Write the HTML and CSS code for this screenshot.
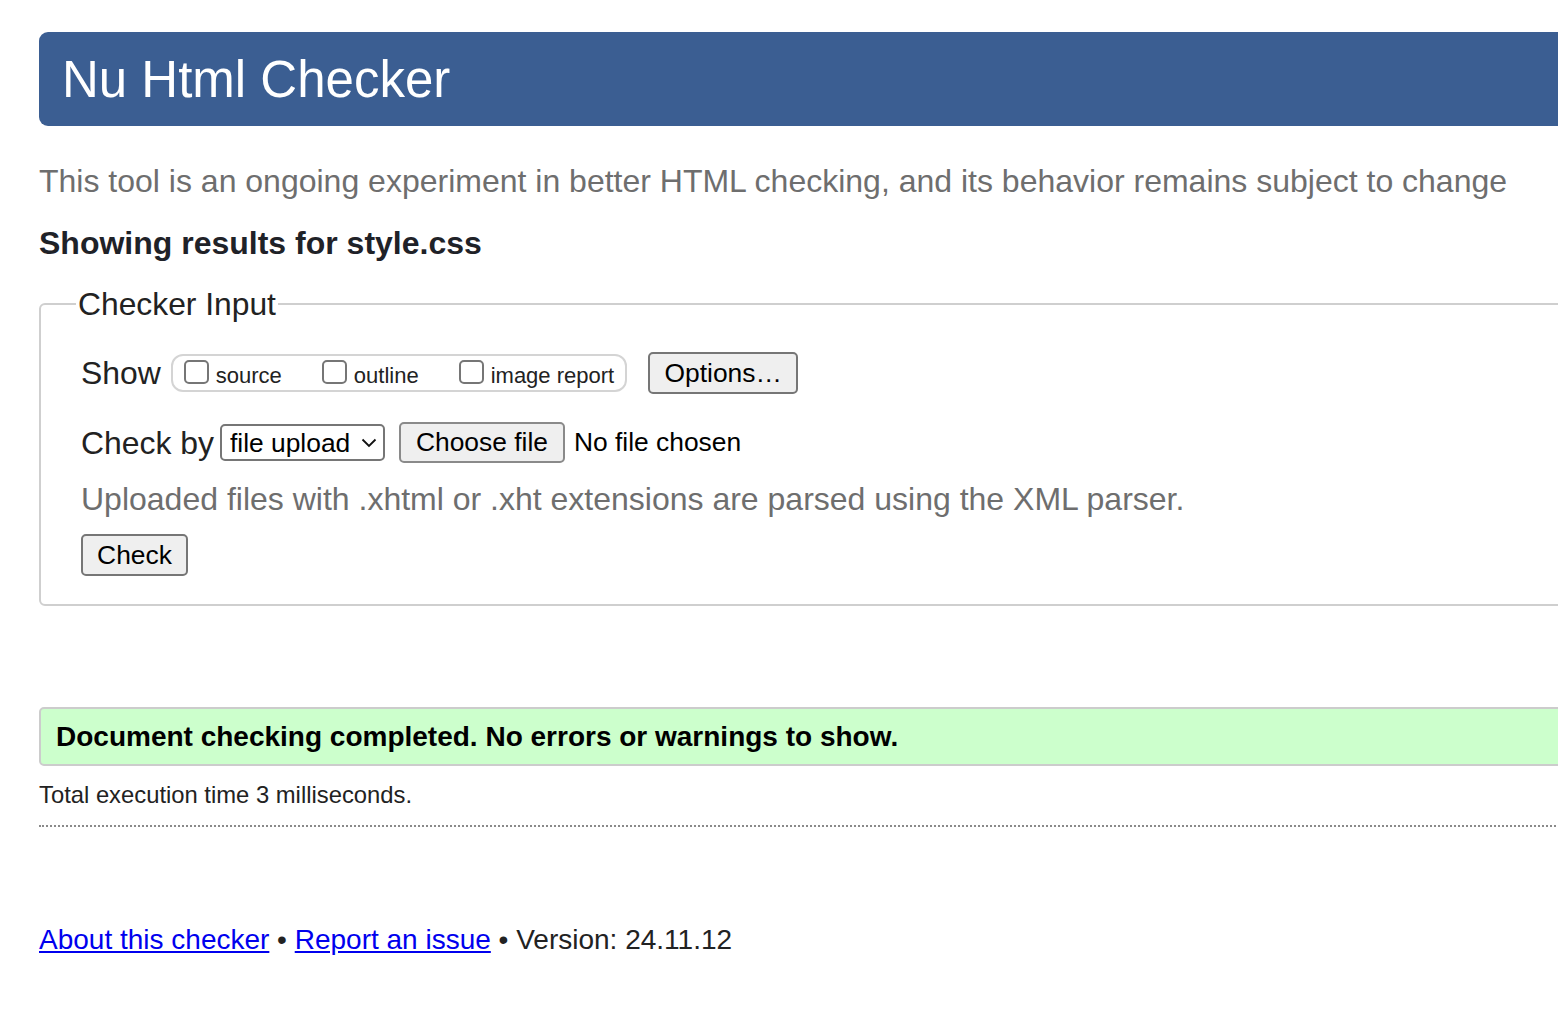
FILE: index.html
```html
<!DOCTYPE html>
<html lang="en">
<head>
<meta charset="utf-8">
<title>Nu Html Checker</title>
<link rel="stylesheet" href="styles.css">
</head>
<body>
<div class="page">
  <header class="banner"><h1 class="title">Nu Html Checker</h1></header>
  <p class="subtitle">This tool is an ongoing experiment in better HTML checking, and its behavior remains subject to change</p>
  <h2 class="results">Showing results for style.css</h2>
  <form class="checker">
    <fieldset class="input-box">
      <legend class="legend">Checker Input</legend>
      <div class="row row-show">
        <span class="row-label">Show</span>
        <div class="show-group">
          <label class="opt"><input type="checkbox" class="cb"><span>source</span></label>
          <label class="opt"><input type="checkbox" class="cb"><span>outline</span></label>
          <label class="opt"><input type="checkbox" class="cb"><span>image report</span></label>
        </div>
        <button type="button" class="btn btn-options">Options…</button>
      </div>
      <div class="row row-check">
        <span class="row-label">Check by</span>
        <div class="select-wrap">
          <select class="select"><option>file upload</option></select>
          <svg class="chev" width="16" height="10" viewBox="0 0 16 10"><path d="M1.5 1.5 L8 8 L14.5 1.5" fill="none" stroke="#111" stroke-width="1.8"/></svg>
        </div>
        <button type="button" class="btn btn-file">Choose file</button>
        <span class="nofile">No file chosen</span>
      </div>
      <p class="hint">Uploaded files with .xhtml or .xht extensions are parsed using the XML parser.</p>
      <button type="button" class="btn btn-check">Check</button>
    </fieldset>
  </form>
  <div class="success">Document checking completed. No errors or warnings to show.</div>
  <p class="exec">Total execution time 3 milliseconds.</p>
  <hr class="dots">
  <p class="footer"><a href="#" class="link">About this checker</a> • <a href="#" class="link">Report an issue</a> • Version: 24.11.12</p>
</div>
</body>
</html>
```
FILE: styles.css
```css
html, body {
  overflow: hidden;
}
body {
  margin: 0;
  padding: 32px 0 0 39px;
  font-family: "Liberation Sans", Arial, sans-serif;
  color: #222;
  background: #fff;
}
.page {
  width: 1600px;
}
.banner {
  height: 94px;
  background: #3b5e92;
  border-radius: 9px 0 0 9px;
  display: flex;
  align-items: center;
}
.title {
  margin: 0 0 0 23px;
  font-size: 51px;
  font-weight: normal;
  color: #fff;
  line-height: 1;
}
.subtitle {
  margin: 37px 0 0;
  font-size: 32px;
  line-height: 36px;
  color: #6e6e6e;
  white-space: nowrap;
}
.results {
  margin: 26px 0 0;
  font-size: 32px;
  line-height: 36px;
  font-weight: bold;
  color: #1f2228;
}
.checker {
  margin: 25px 0 0;
}
.input-box {
  margin: 0;
  border: 2px solid #cfcfcf;
  border-radius: 6px;
  padding: 30px 0 28px 40px;
  min-width: 0;
}
.legend {
  font-size: 31.8px;
  line-height: 36px;
  padding: 0 2px;
  margin-left: -5px;
  color: #222;
}
.row {
  display: flex;
  align-items: center;
}
.row-label {
  font-size: 31.9px;
  line-height: 36px;
  color: #222;
}
.row-show {
  height: 42px;
}
.show-group {
  margin-left: 10px;
  height: 38px;
  box-sizing: border-box;
  border: 2px solid #d4d4d4;
  border-radius: 12px;
  padding: 0 11px;
  display: flex;
  align-items: center;
  gap: 40px;
}
.opt {
  display: flex;
  align-items: center;
  font-size: 22px;
  line-height: 26px;
  color: #222;
}
.opt span {
  margin-top: 5px;
}
.cb {
  appearance: none;
  -webkit-appearance: none;
  margin: 0 7px 3px 0;
  width: 25px;
  height: 24px;
  box-sizing: border-box;
  border: 2px solid #767676;
  border-radius: 5px;
  background: #fff;
}
.btn {
  font-family: "Liberation Sans", Arial, sans-serif;
  font-size: 26.4px;
  color: #000;
  background: #efefef;
  border: 2px solid #767676;
  border-radius: 5px;
  box-sizing: border-box;
  padding: 0;
  line-height: 1;
}
.btn-options {
  margin-left: 21px;
  width: 150px;
  height: 42px;
}
.row-check {
  margin-top: 28px;
  height: 41px;
}
.select-wrap {
  position: relative;
  margin-left: 6px;
}
.select {
  appearance: none;
  -webkit-appearance: none;
  display: block;
  width: 165px;
  height: 37px;
  box-sizing: border-box;
  border: 2px solid #767676;
  border-radius: 5px;
  background: #fff;
  font-family: "Liberation Sans", Arial, sans-serif;
  font-size: 26.4px;
  color: #000;
  padding: 0 0 0 8px;
}
.chev {
  position: absolute;
  right: 8px;
  top: 14px;
  pointer-events: none;
}
.btn-file {
  margin-left: 14px;
  width: 166px;
  height: 41px;
  border-color: #8a8a8a;
}
.nofile {
  margin-left: 9px;
  font-size: 26.4px;
  color: #000;
}
.hint {
  margin: 18px 0 0;
  font-size: 32px;
  line-height: 36px;
  color: #6e6e6e;
  white-space: nowrap;
}
.btn-check {
  display: block;
  margin: 17px 0 0 0;
  width: 107px;
  height: 42px;
}
.success {
  margin-top: 101px;
  height: 59px;
  box-sizing: border-box;
  background: #ccffcc;
  border: 2px solid #cccccc;
  border-radius: 5px 0 0 5px;
  padding-left: 15px;
  display: flex;
  align-items: center;
  font-size: 28px;
  font-weight: bold;
  color: #000;
}
.exec {
  margin: 14px 0 0;
  font-size: 23.8px;
  line-height: 30px;
  color: #222;
}
.dots {
  margin: 15px 0 0;
  border: 0;
  border-top: 2px dotted #8a8a8a;
  height: 0;
}
.footer {
  margin: 97px 0 0;
  font-size: 28px;
  line-height: 32px;
  color: #222;
}
.link {
  color: #0000ee;
  text-decoration: underline;
}
```
